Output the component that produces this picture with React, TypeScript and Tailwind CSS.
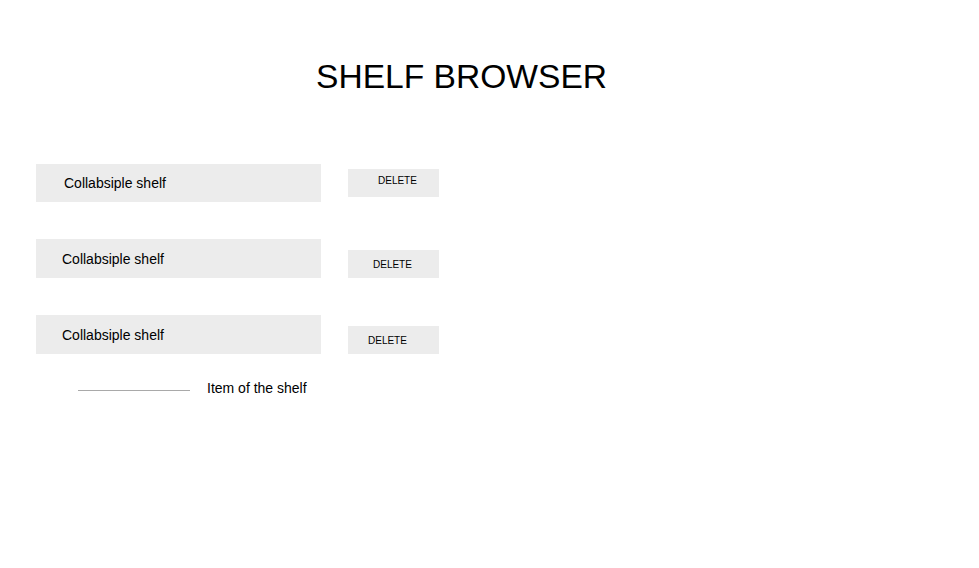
import { FC } from "react";

type ShelfRowProps = {
  align: "center" | "end";
  height: string;
  labelPad: string;
  buttonPad: string;
  className?: string;
};

const ShelfRow: FC<ShelfRowProps> = ({ align, height, labelPad, buttonPad, className }) => {
  return (
    <div className={`flex ${align === "center" ? "items-center" : "items-end"} ${className ?? ""}`}>
      <div className={`flex items-center w-[285px] bg-[#ececec] text-sm text-black ${height} ${labelPad}`}>
        Collabsiple shelf
      </div>
      <button
        type="button"
        className={`ml-[27px] w-[91px] h-[28px] bg-[#ececec] text-[10px] text-black text-left leading-none ${buttonPad}`}
      >
        DELETE
      </button>
    </div>
  );
};

export default function App() {
  return (
    <div className="min-h-screen bg-white font-['Liberation_Sans',Arial,sans-serif] text-black">
      <h1 className="pt-[60px] pl-[316px] text-[33.6px] leading-[34px] font-normal">SHELF BROWSER</h1>
      <div className="mt-[70px] px-9">
        <ShelfRow align="center" height="h-[38px]" labelPad="pl-7" buttonPad="pl-[30px] pb-[5px]" />
        <ShelfRow
          align="end"
          height="h-[39px]"
          labelPad="pl-[26px]"
          buttonPad="pl-[25px] pt-[2px]"
          className="mt-[37px]"
        />
        <ShelfRow
          align="end"
          height="h-[39px]"
          labelPad="pl-[26px]"
          buttonPad="pl-[20px] pt-[2px]"
          className="mt-[37px]"
        />
        <div className="flex items-start mt-[25px] h-4">
          <div className="ml-[42px] mt-[11px] w-[112px] h-px bg-[#a9a9a9]" />
          <span className="ml-[17px] mt-px text-sm leading-4">Item of the shelf</span>
        </div>
      </div>
    </div>
  );
}
